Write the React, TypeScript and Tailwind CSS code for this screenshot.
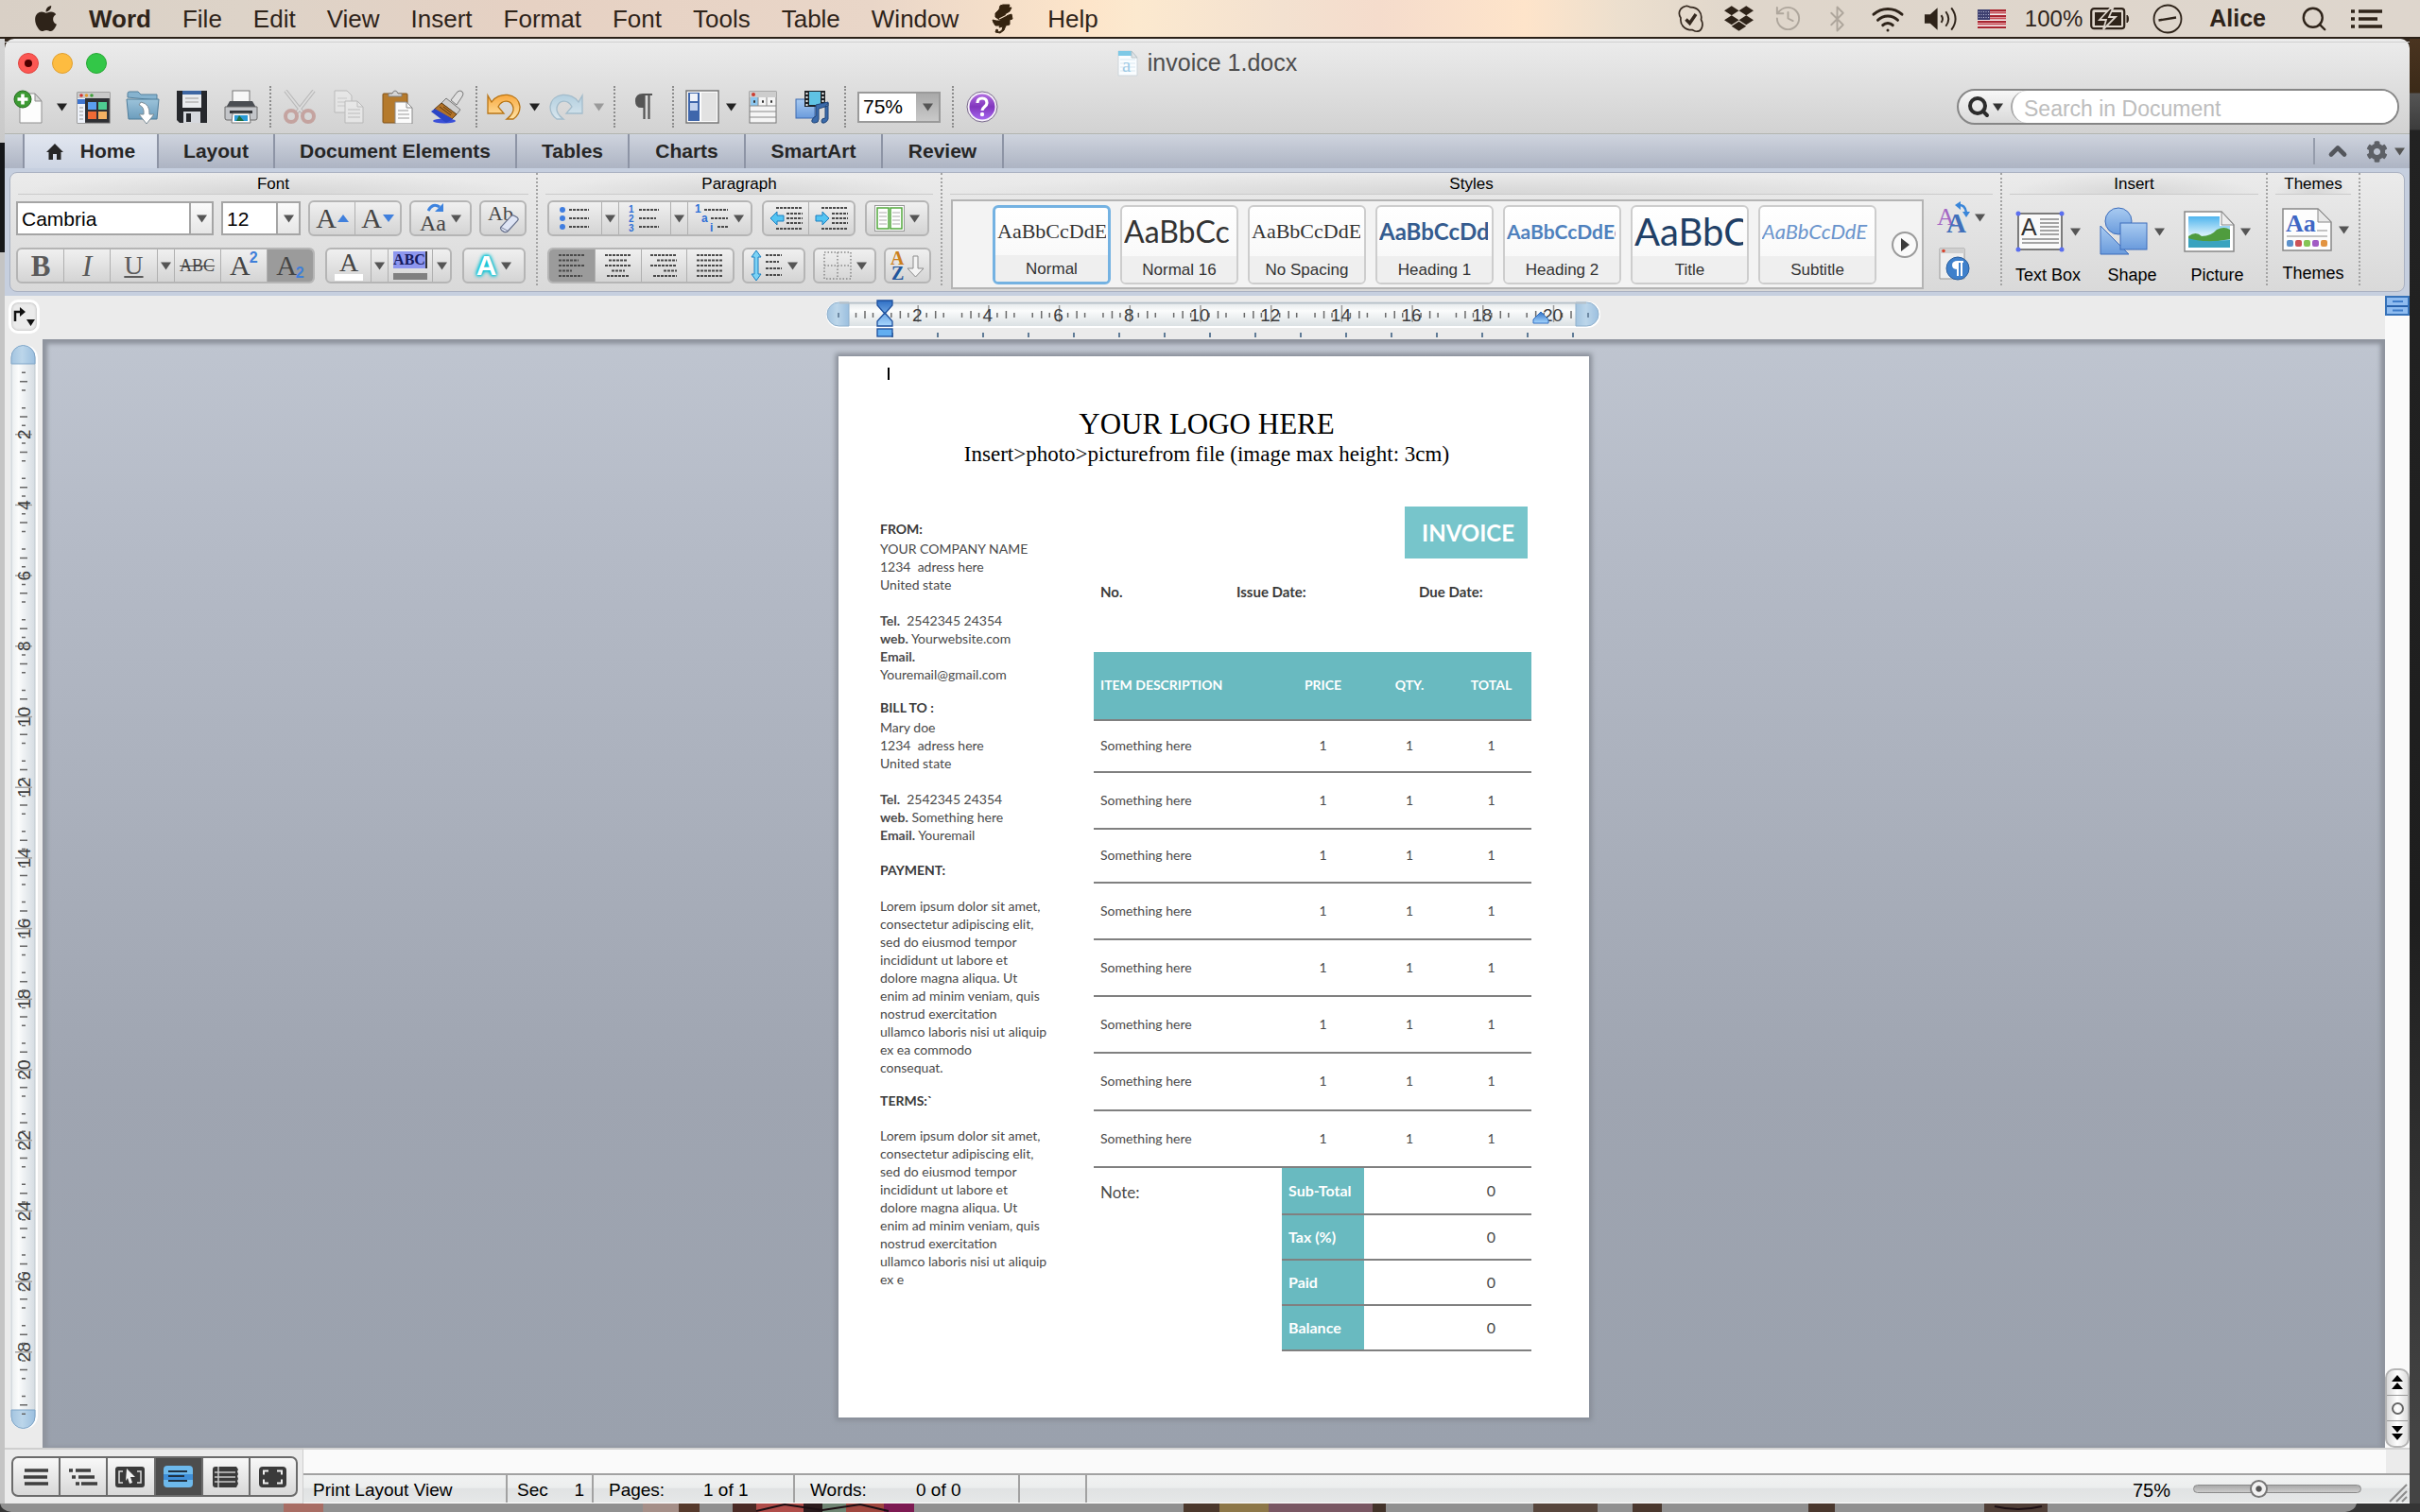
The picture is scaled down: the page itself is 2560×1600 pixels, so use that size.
import React from "react";
import { FaApple, FaDropbox, FaCog } from "react-icons/fa";
import { Bluetooth, History, Search, Wifi, ChevronUp } from "lucide-react";

const SANS = "font-['Liberation_Sans',sans-serif]";
const SERIF = "font-['Liberation_Serif',serif]";

type Kids = { children?: React.ReactNode };

function Defs() {
  return (
    <svg width="0" height="0" className="absolute" aria-hidden="true">
      <defs>
        <linearGradient id="blueV" x1="0" y1="0" x2="0" y2="1">
          <stop offset="0" stopColor="#a9cbf1" />
          <stop offset="1" stopColor="#6a9bdc" />
        </linearGradient>
        <linearGradient id="folder" x1="0" y1="0" x2="0" y2="1">
          <stop offset="0" stopColor="#9cc3da" />
          <stop offset="1" stopColor="#6c9dbd" />
        </linearGradient>
        <linearGradient id="orange" x1="0" y1="0" x2="0" y2="1">
          <stop offset="0" stopColor="#f9a93f" />
          <stop offset="1" stopColor="#ffe3a6" />
        </linearGradient>
        <linearGradient id="pale" x1="0" y1="0" x2="0" y2="1">
          <stop offset="0" stopColor="#b3cfdf" />
          <stop offset="1" stopColor="#d8e6ee" />
        </linearGradient>
        <linearGradient id="sky" x1="0" y1="0" x2="0" y2="1">
          <stop offset="0" stopColor="#4fb4ee" />
          <stop offset="0.6" stopColor="#d8f1fb" />
          <stop offset="1" stopColor="#2f9bc4" />
        </linearGradient>
        <linearGradient id="purple" x1="0" y1="0" x2="0" y2="1">
          <stop offset="0" stopColor="#b06be0" />
          <stop offset="0.5" stopColor="#8136bd" />
          <stop offset="1" stopColor="#a565ee" />
        </linearGradient>
        <linearGradient id="rulerH" x1="0" y1="0" x2="0" y2="1">
          <stop offset="0" stopColor="#e2e7e9" />
          <stop offset="0.35" stopColor="#fbfcfc" />
          <stop offset="1" stopColor="#dbe1e4" />
        </linearGradient>
        <linearGradient id="rulerV" x1="0" y1="0" x2="1" y2="0">
          <stop offset="0" stopColor="#e8ecee" />
          <stop offset="0.3" stopColor="#fbfcfc" />
          <stop offset="1" stopColor="#d5dce2" />
        </linearGradient>
        <linearGradient id="cap" x1="0" y1="0" x2="1" y2="0">
          <stop offset="0" stopColor="#a3c4e0" />
          <stop offset="0.45" stopColor="#bcd6ea" />
          <stop offset="1" stopColor="#9bbfdf" />
        </linearGradient>
        <linearGradient id="marker" x1="0" y1="0" x2="0" y2="1">
          <stop offset="0" stopColor="#2f6fc4" />
          <stop offset="1" stopColor="#a8d8ff" />
        </linearGradient>
      </defs>
    </svg>
  );
}

function Arrow({ color = "#555555" }: { color?: string }) {
  return (
    <svg viewBox="0 0 11 9" className="h-[9px] w-[11px] shrink-0" aria-hidden="true">
      <path d="M0 0.5H11L5.5 8.5Z" fill={color} />
    </svg>
  );
}

/* ---------- system menu bar ---------- */

const MENUS_A = ["File", "Edit", "View", "Insert", "Format", "Font", "Tools", "Table", "Window"];

function MenuBar() {
  return (
    <header className="flex h-[41px] items-center border-b-2 border-[#2b2118] bg-[linear-gradient(90deg,#d9d0c6_0%,#ddd3c8_10%,#e6d1c3_22%,#e9d6c8_36%,#fde5ca_45%,#fce9cf_47%,#f3e1d0_53%,#f5dccc_57%,#fee4ca_63%,#ecdfce_67%,#dfd6cb_72%,#ded6cd_100%)] pr-[39px] pl-[36px] text-[26px] leading-none text-[#2e2319]">
      <nav aria-label="Menu" className="flex items-center gap-[33px] whitespace-nowrap">
        <button aria-label="Apple menu">
          <FaApple className="h-[31px] w-[25px]" />
        </button>
        <button className="font-bold">Word</button>
        {MENUS_A.map((m) => (
          <button key={m}>{m}</button>
        ))}
        <button aria-label="Scripts" className="mx-[2px] w-6">
          <svg viewBox="0 0 24 32" className="h-8 w-6" aria-hidden="true">
            <path
              d="M12 1h7l-1 3h3l-2 4-5 3 1 2 6-2 1 5-3 1v5l-4 1-2 5-4 3-5-1 1-3 2 1-1 1 2 1 3-2 1-4-4 1 1-2-5 0-2-3-1-3 4 1 5 0-6-4v-4l4-4 1-4z"
              fill="#35230f"
              stroke="#35230f"
              strokeLinejoin="round"
            />
            <path d="M8 16l8-4" stroke="#f3dcc4" strokeWidth="1.200" fill="none" />
          </svg>
        </button>
        <button>Help</button>
      </nav>
      <div className="ml-auto flex items-center gap-5 whitespace-nowrap">
        <svg viewBox="0 0 30 30" className="h-[30px] w-[30px]" aria-label="Chat">
          <path
            d="M9 1.5c2-.6 4 .4 5 1.200 8-.2 13 6 11.500 13 3 5 1 12-4 12.500-2 .3-4-1-5-1.500C8 27 3 21 4 14 .5 9 3 3 9 1.500z"
            fill="none"
            stroke="#35291f"
            strokeWidth="1.700"
          />
          <path d="M9.500 15.500l4 4L20 10" fill="none" stroke="#35291f" strokeWidth="3.400" />
        </svg>
        <FaDropbox className="h-[31px] w-[31px]" />
        <History className="h-[31px] w-[33px] text-[#aea69c]" strokeWidth={1.5} />
        <Bluetooth className="h-[30px] w-[31px] text-[#aea69c]" strokeWidth={1.5} />
        <Wifi className="h-[38px] w-[36px]" strokeWidth={2} />
        <svg viewBox="0 0 38 30" className="h-[30px] w-[37px]" aria-label="Volume">
          <path d="M1 10h6l8-7v24l-8-7H1z" fill="#2e2319" />
          <path d="M19 11q3 4 0 8M24 7q6 8 0 16M30 3q9 12 0 24" fill="none" stroke="#2e2319" strokeWidth="2" />
        </svg>
        <svg viewBox="0 0 30 20" className="h-5 w-[30px]" aria-label="US keyboard">
          <rect width="30" height="20" fill="#f4eeee" />
          {[0, 2, 4, 6].map((i) => (
            <rect key={i} y={i * 3} width="30" height="2.200" fill="#a8242f" />
          ))}
          {[1, 3, 5].map((i) => (
            <rect key={i} y={i * 3 - 0.4} width="30" height="1.800" fill="#c94d55" />
          ))}
          <rect width="13" height="11" fill="#3d3f70" />
          <path d="M1 2.500h11M1 5.500h11M1 8.500h11" stroke="#b9bad2" strokeWidth="1" strokeDasharray="1 1.500" />
        </svg>
        <span className="flex items-center gap-2 text-[24px]">
          100%
          <svg viewBox="0 0 42 24" className="h-6 w-[42px]" aria-hidden="true">
            <rect x="1.200" y="1.200" width="35" height="21" rx="3" fill="none" stroke="#2e2319" strokeWidth="2.200" />
            <path d="M39 8c2 1 2 7 0 8z" fill="#2e2319" stroke="#2e2319" />
            <path d="M5 5h28v14H5z" fill="#2e2319" />
            <path d="M21 1L10 13h7l-3 10L27 10h-7l4-9z" fill="#2e2319" stroke="#ded6cd" strokeWidth="1.800" />
          </svg>
        </span>
        <svg viewBox="0 0 32 32" className="mx-1 h-[32px] w-[32px]" aria-label="Clock">
          <circle cx="16" cy="16" r="14.500" fill="none" stroke="#2e2319" strokeWidth="1.800" />
          <path d="M6.500 17.500L25 14.500" stroke="#2e2319" strokeWidth="2.400" />
        </svg>
        <button className="ml-1 text-[25px] font-bold">Alice</button>
        <button aria-label="Spotlight" className="mr-1 ml-4">
          <Search className="h-[30px] w-[30px]" strokeWidth={1.900} />
        </button>
        <button aria-label="Notifications">
          <svg viewBox="0 0 34 20" className="h-5 w-[34px]" aria-hidden="true">
            <path d="M0 2h4M0 10h4M0 18h4M8 2h25M8 10h20M8 18h25" stroke="#2e2319" strokeWidth="3.600" />
          </svg>
        </button>
      </div>
    </header>
  );
}

/* ---------- title and standard toolbar ---------- */

function Sep() {
  return (
    <span className="flex h-11 w-[18px] shrink-0 justify-center">
      <span className="border-l-2 border-dotted border-[#8c8c8c]" />
    </span>
  );
}

function Tool({ label, children, width = "w-[52px]" }: Kids & { label: string; width?: string }) {
  return (
    <button
      aria-label={label}
      className={width + " flex h-11 shrink-0 items-center justify-center"}
    >
      {children}
    </button>
  );
}

function DropBtn({ dim = false, label }: { dim?: boolean; label: string }) {
  return (
    <button aria-label={label} className="flex h-11 w-4 shrink-0 items-center justify-center">
      <Arrow color={dim ? "#9a9a9a" : "#222222"} />
    </button>
  );
}

const ICON = "h-9 w-9";

function Toolbar() {
  return (
    <div className="flex items-center pt-[3px]">
      <Tool label="New">
        <svg viewBox="0 0 36 36" className={ICON}>
          <path d="M8 4h16l7 8v23H8z" fill="#fdfdfd" stroke="#8f8f8f" />
          <path d="M24 4v8h7z" fill="#d7d7d7" stroke="#8f8f8f" />
          <circle cx="11" cy="10" r="9" fill="#3c9a33" stroke="#22691c" />
          <path d="M11 4.500v11M5.500 10h11" stroke="#fff" strokeWidth="3.600" />
        </svg>
      </Tool>
      <DropBtn label="New options" />
      <Tool label="Template gallery">
        <svg viewBox="0 0 36 36" className={ICON}>
          <rect x="1" y="3" width="34" height="32" fill="#2e2f33" stroke="#666" />
          <rect x="1" y="3" width="34" height="6" fill="#c9c9c9" />
          <circle cx="5" cy="6" r="1.800" fill="#d3342f" />
          <circle cx="10.500" cy="6" r="1.800" fill="#e29a2e" />
          <circle cx="16" cy="6" r="1.800" fill="#3fa13b" />
          <rect x="1" y="9" width="8" height="26" fill="#eef2fa" />
          <rect x="1" y="10" width="8" height="5" fill="#3e74cf" />
          <path d="M3 19h4M3 23h4M3 27h4M3 31h4" stroke="#999" />
          <rect x="12" y="13" width="9" height="8" fill="#5a9ff0" />
          <rect x="23" y="13" width="9" height="8" fill="#4ecb91" />
          <rect x="12" y="23" width="9" height="8" fill="#ee6a35" />
          <rect x="23" y="23" width="9" height="8" fill="#f3b163" />
        </svg>
      </Tool>
      <Tool label="Open">
        <svg viewBox="0 0 36 36" className={ICON}>
          <path d="M2 8V4q0-2 2-2h9l3 3h17v6z" fill="#86b3cf" stroke="#54809c" />
          <path d="M1 10h34l-2 21H3z" fill="url(#folder)" stroke="#4f7c99" />
          <path d="M16 13q10 2 9 13h5l-8 10-8-10h5q1-8-5-10z" fill="#fff" stroke="#7c8c96" />
        </svg>
      </Tool>
      <Tool label="Save">
        <svg viewBox="0 0 36 36" className={ICON}>
          <path d="M2 1h32v34H5l-3-3z" fill="#26282c" />
          <rect x="8" y="1" width="20" height="18" fill="#e9ebee" />
          <rect x="8" y="1" width="20" height="4" fill="#3d66a3" />
          <path d="M11 9h14M11 13h14" stroke="#b5b5b5" strokeWidth="1.500" />
          <rect x="9" y="23" width="18" height="12" fill="#d6d9de" />
          <rect x="12" y="25" width="5" height="9" fill="#26282c" />
        </svg>
      </Tool>
      <Tool label="Print">
        <svg viewBox="0 0 36 36" className={ICON}>
          <rect x="9" y="1" width="18" height="14" fill="#f7f7f7" stroke="#777" />
          <path d="M6 12h24l4 7H2z" fill="#4a4d52" />
          <path d="M1 18h34v12q0 2-2 2H3q-2 0-2-2z" fill="#c3c5c9" stroke="#6b6b6b" />
          <path d="M6 22h24v3H6z" fill="#34363a" />
          <path d="M9 25h18l1 10H8z" fill="#fff" stroke="#777" />
          <path d="M11 27h14v6H11z" fill="#2a9ad6" />
          <path d="M16 27l5 6h-8z" fill="#1d6f3f" />
        </svg>
      </Tool>
      <span className="-mx-1">
        <Sep />
      </span>
      <Tool label="Cut">
        <svg viewBox="0 0 36 36" className={ICON + " opacity-60"}>
          <path d="M3 1l18 23M33 1L15 24" stroke="#a3a3a3" strokeWidth="4" />
          <path d="M3 1l18 23M33 1L15 24" stroke="#dedede" strokeWidth="2" />
          <circle cx="9" cy="28" r="6" fill="none" stroke="#b9827c" strokeWidth="4" />
          <circle cx="27" cy="28" r="6" fill="none" stroke="#b9827c" strokeWidth="4" />
        </svg>
      </Tool>
      <Tool label="Copy">
        <svg viewBox="0 0 36 36" className={ICON + " opacity-60"}>
          <path d="M3 1h13l5 5v18H3z" fill="#ececec" stroke="#a5a5a5" />
          <path d="M6 9h10M6 13h10M6 17h8" stroke="#bbb" />
          <path d="M14 12h13l6 6v17H14z" fill="#f0f0f0" stroke="#a5a5a5" />
          <path d="M27 12v6h6M17 21h13M17 25h13M17 29h13" stroke="#a9a9a9" fill="none" />
        </svg>
      </Tool>
      <Tool label="Paste">
        <svg viewBox="0 0 36 36" className={ICON}>
          <rect x="2" y="4" width="26" height="31" rx="1" fill="#b57a2c" stroke="#80531a" />
          <path d="M8 7h14V4h-4q-1-3-3-3t-3 3H8z" fill="#d6d6d6" stroke="#7e7e7e" />
          <path d="M15 13h12l6 6v17H15z" fill="#fcfcfc" stroke="#8a8a8a" />
          <path d="M27 13v6h6" fill="none" stroke="#8a8a8a" />
          <path d="M18 22h11M18 26h12M18 30h12" stroke="#999" />
        </svg>
      </Tool>
      <Tool label="Format painter">
        <svg viewBox="0 0 36 36" className={ICON}>
          <ellipse cx="15" cy="33" rx="12" ry="2.500" fill="#3b50d8" />
          <path d="M22 11L29 2q3-2 5 0t0 5l-6 9z" fill="#e0e0e0" stroke="#777" />
          <path d="M17 9l15 12-4 5L12 14z" fill="#cfcfcf" stroke="#777" />
          <path d="M12 14l16 12-5 5L4 21z" fill="#b27228" stroke="#5f3b11" />
          <path d="M5 20l19 11-7 4L1 23z" fill="#2b45c6" />
          <path d="M10 18l12 9M14 18l9 7" stroke="#5f3b11" />
        </svg>
      </Tool>
      <span className="-mx-1">
        <Sep />
      </span>
      <Tool label="Undo" width="w-12">
        <svg viewBox="0 0 36 30" className="h-[30px] w-9">
          <path d="M1 3l4 7C12-1 33-1 35 15q0 8-7 13h-7q8-6 7-12C26 7 16 7 12 15l6 7H1z" fill="url(#orange)" stroke="#b87414" strokeWidth="1.300" />
        </svg>
      </Tool>
      <DropBtn label="Undo history" />
      <Tool label="Redo">
        <svg viewBox="0 0 36 30" className="h-[30px] w-9">
          <path d="M35 3l-4 7C24-1 3-1 1 15q0 8 7 13h7q-8-6-7-12C10 7 20 7 24 15l-6 7h17z" fill="url(#pale)" stroke="#a3bccb" strokeWidth="1.300" />
        </svg>
      </Tool>
      <DropBtn label="Redo history" dim />
      <Sep />
      <Tool label="Show formatting" width="w-11">
        <svg viewBox="0 0 20 28" className="h-7 w-5">
          <path d="M19 1H9M15.500 1v26M10.500 1v26" fill="none" stroke="#555" strokeWidth="2.200" />
          <path d="M11 0H9Q1 0 1 8t8 7h2z" fill="#555" />
        </svg>
      </Tool>
      <Sep />
      <Tool label="Sidebar" width="w-11">
        <svg viewBox="0 0 36 36" className={ICON}>
          <rect x="1" y="1" width="34" height="34" fill="#fdfdfd" stroke="#777" strokeWidth="1.500" />
          <rect x="3" y="3" width="12" height="30" fill="#3f66ab" />
          <rect x="5" y="4" width="8" height="8" fill="#f0f4fb" />
          <rect x="5" y="14" width="8" height="8" fill="#c2d2ee" />
          <rect x="17" y="3" width="16" height="30" fill="#e2e2e2" />
        </svg>
      </Tool>
      <DropBtn label="Sidebar options" />
      <Tool label="Toolbox">
        <svg viewBox="0 0 36 36" className={ICON}>
          <rect x="4" y="2" width="28" height="33" fill="#f5f5f5" stroke="#777" />
          <rect x="4" y="2" width="28" height="6" fill="#cdcdcd" />
          <circle cx="8" cy="5" r="2" fill="#cb3b30" />
          <rect x="5" y="8" width="8" height="9" fill="#8cc7ef" />
          <path d="M13 8v9M22 8v9M4 17h28M4 23h28M4 29h28" stroke="#888" />
          <path d="M8 12.500h2M17 12.500h2M26 12.500h2" stroke="#333" strokeWidth="2.500" />
        </svg>
      </Tool>
      <Tool label="Media browser">
        <svg viewBox="0 0 36 36" className={ICON}>
          <rect x="1" y="10" width="20" height="20" fill="url(#blueV)" stroke="#3d6ab0" />
          <rect x="10" y="1" width="22" height="17" fill="#1e2226" />
          <rect x="15" y="2" width="12" height="14" fill="#5fc3e4" />
          <path d="M12.500 3v14M29.500 3v14" stroke="#eee" strokeWidth="2" strokeDasharray="2 2" />
          <path d="M22 16l13-3v4l-10 3v11q0 4-4 4t-3-3 4-4zM32 18v12q-4 0-4 3t3 2 4-4V14z" fill="#3a6aaa" stroke="#1f4478" />
        </svg>
      </Tool>
      <Sep />
      <span className="mx-1 flex h-[33px] w-[88px] items-center border-2 border-[#9a9a9a] bg-white">
        <input aria-label="Zoom" defaultValue="75%" className="w-[60px] pl-1 text-[21px] text-black outline-none" />
        <button aria-label="Zoom options" className="flex h-full flex-1 items-center justify-center bg-linear-to-b from-[#a9a9a9] to-[#c9c9c9]">
          <Arrow />
        </button>
      </span>
      <Sep />
      <Tool label="Help" width="w-11">
        <svg viewBox="0 0 34 34" className="h-[34px] w-[34px]">
          <circle cx="17" cy="17" r="16" fill="#f6f0fa" stroke="#77688a" />
          <circle cx="17" cy="17" r="13.500" fill="url(#purple)" />
          <path d="M12 13q0-5 5-5t5 5c0 4-5 4-5 8" fill="none" stroke="#fff" strokeWidth="3.200" />
          <circle cx="17" cy="25" r="2.200" fill="#fff" />
        </svg>
      </Tool>
      <div className="mr-[11px] ml-auto flex h-[38px] w-[468px] items-stretch rounded-full border-2 border-[#868686] bg-linear-to-b from-[#f7f7f7] to-[#d9d9d9]">
        <button aria-label="Search options" className="flex w-[55px] items-center justify-center gap-[3px]">
          <Search className="h-6 w-6 text-[#2c2c2c]" strokeWidth={4} />
          <Arrow color="#333333" />
        </button>
        <input
          aria-label="Search in Document"
          placeholder="Search in Document"
          className="min-w-0 flex-1 rounded-full border-l-2 border-[#a9a9a9] bg-white pt-1 pl-3 text-[23px] leading-none outline-none placeholder:text-[#bdbdbd]"
        />
      </div>
    </div>
  );
}

function TitleBar() {
  return (
    <div className="h-[101px] rounded-t-[10px] border-b border-[#b3b5b0] bg-linear-to-b from-[#ececec] to-[#d2d2d2]">
      <div className="h-1 border-b border-[#d0d0d0]" />
      <div className="grid h-[43px] grid-cols-[1fr_auto_1fr] items-center">
        <div className="flex gap-[14px] pl-[14px]">
          <button aria-label="Close" className="flex h-[22px] w-[22px] items-center justify-center rounded-full border border-[#e0443e] bg-[#fc5753]">
            <span className="h-2 w-2 rounded-full bg-[#4d0000]" />
          </button>
          <button aria-label="Minimize" className="h-[22px] w-[22px] rounded-full border border-[#e0a030] bg-[#fdbc40]" />
          <button aria-label="Zoom window" className="h-[22px] w-[22px] rounded-full border border-[#27a835] bg-[#33c748]" />
        </div>
        <h1 className="flex items-center gap-[10px] text-[25px] leading-none text-[#4d4d4d]">
          <svg viewBox="0 0 22 28" className="h-7 w-[22px] overflow-visible" aria-hidden="true">
            <path d="M1 1h14l6 7v19H1z" fill="#fafdff" stroke="#cdd5da" />
            <path d="M1 1h14v5H1z" fill="#7dc9e6" />
            <path d="M15 1v7h6z" fill="#dfe5e8" stroke="#b9c2c7" />
            <path d="M3 10h16M3 14h16M3 18h16M3 22h16" stroke="#d9e8f1" />
            <text x="5" y="23" fontFamily="Liberation Serif" fontSize="21" fill="#9fcbe6">a</text>
          </svg>
          invoice 1.docx
        </h1>
      </div>
      <Toolbar />
    </div>
  );
}

/* ---------- tabs ---------- */

const TABS: [string, string][] = [
  ["Layout", "w-[123px]"],
  ["Document Elements", "w-[256px]"],
  ["Tables", "w-[119px]"],
  ["Charts", "w-[123px]"],
  ["SmartArt", "w-[145px]"],
  ["Review", "w-[128px]"],
];

function Tabs() {
  return (
    <div className="flex h-9 items-stretch bg-linear-to-b from-[#cfd4de] to-[#adb4c3] text-[21px] font-bold text-[#262626]">
      <div className="w-[21px] border-r-2 border-[#8d94a5]" />
      <nav aria-label="Ribbon tabs" className="flex whitespace-nowrap">
        <button className="flex w-[142px] items-center justify-center gap-[18px] border-r-2 border-[#8d94a5] bg-linear-to-b from-[#e2e7f0] to-[#cdd5e3]">
          <svg viewBox="0 0 18 17" className="h-[17px] w-[18px]" aria-hidden="true">
            <path d="M9 0l9 9h-2.500v8H11v-6H7v6H2.500V9H0z" fill="#262626" />
          </svg>
          Home
        </button>
        {TABS.map(([t, w]) => (
          <button key={t} className={w + " border-r-2 border-[#8d94a5]"}>
            {t}
          </button>
        ))}
      </nav>
      <div className="ml-auto flex items-center">
        <span className="h-7 border-l-2 border-[#959cab]" />
        <button aria-label="Collapse ribbon" className="flex w-12 justify-center">
          <ChevronUp className="h-7 w-7 text-[#53565c]" strokeWidth={4} />
        </button>
        <button aria-label="Ribbon settings" className="flex w-[52px] items-center justify-center gap-[7px]">
          <FaCog className="h-[23px] w-[23px] text-[#5d6066]" />
          <Arrow />
        </button>
      </div>
    </div>
  );
}

/* ---------- ribbon ---------- */

function Group({ title, className, children }: Kids & { title: string; className: string }) {
  return (
    <section aria-label={title} className={className + " flex shrink-0 border-r-2 border-dotted border-[#a3a3a3]"}>
      <div className="flex min-w-0 flex-1 flex-col">
        <h2 className="mx-2 h-[23px] border-b border-[#cbcbcb] bg-[radial-gradient(ellipse_at_bottom,#d6d6d6,transparent_70%)] text-center text-[17px] leading-6 text-black">
          {title}
        </h2>
        {children}
      </div>
    </section>
  );
}

function Segment({ children, className = "" }: Kids & { className?: string }) {
  return (
    <div
      className={
        className +
        " flex h-[38px] shrink-0 divide-x divide-[#b0b0b0] overflow-hidden rounded-[6px] border-2 border-[#b5b5b5] bg-linear-to-b from-[#f0f0f0] to-[#d4d4d4]"
      }
    >
      {children}
    </div>
  );
}

function Cell({ label, children, className = "flex-1", on = false }: Kids & { label: string; className?: string; on?: boolean }) {
  return (
    <button
      aria-label={label}
      aria-pressed={on}
      className={
        className + " flex min-w-0 items-center justify-center gap-[5px] leading-none text-[#444444]" + (on ? " bg-[#9b9b9b]" : "")
      }
    >
      {children}
    </button>
  );
}

function Drop({ label }: { label: string }) {
  return (
    <Cell label={label} className="w-[18px] shrink-0">
      <Arrow />
    </Cell>
  );
}

function Combo({ label, value, width }: { label: string; value: string; width: string }) {
  return (
    <span className={width + " grid h-9 grid-cols-[1fr_24px] self-center border-2 border-[#a5a5a5] bg-white"}>
      <select aria-label={label} className="w-full appearance-none pl-1 text-[21px] leading-none text-black outline-none">
        <option>{value}</option>
      </select>
      <span className="flex items-center justify-center border-l-2 border-[#a5a5a5] bg-linear-to-b from-[#fbfbfb] to-[#e6e6e6]">
        <Arrow />
      </span>
    </span>
  );
}

const LIGN = "stroke-[#4a4a4a] stroke-2 [stroke-dasharray:3_1]";

function Lines({ d }: { d: string }) {
  return (
    <svg viewBox="0 0 30 26" className="h-[26px] w-[30px]" aria-hidden="true">
      <path d={d} className={LIGN} fill="none" />
    </svg>
  );
}

function FontGroup() {
  return (
    <Group title="Font" className="w-[558px]">
      <div className="flex flex-col gap-3 px-[6px] pt-[6px]">
        <div className="flex gap-2">
          <Combo label="Font name" value="Cambria" width="w-[209px]" />
          <Combo label="Font size" value="12" width="w-[84px]" />
          <Segment className="w-[99px]">
            <Cell label="Grow font">
              <span className={SERIF + " -mr-1 text-[30px]"}>A</span>
              <svg viewBox="0 0 12 8" className="h-2 w-3"><path d="M0 8L6 0l6 8z" fill="#4080dd" /></svg>
            </Cell>
            <Cell label="Shrink font">
              <span className={SERIF + " -mr-1 text-[30px]"}>A</span>
              <svg viewBox="0 0 12 8" className="h-2 w-3"><path d="M0 0l6 8 6-8z" fill="#4080dd" /></svg>
            </Cell>
          </Segment>
          <Segment className="w-[66px]">
            <Cell label="Change case">
              <span className="relative">
                <span className={SERIF + " block pt-[9px] text-[24px]"}>Aa</span>
                <svg viewBox="0 0 18 10" className="absolute top-0 left-2 h-[10px] w-[18px]">
                  <path d="M1 8Q6-1 13 4" fill="none" stroke="#3d83df" strokeWidth="3" />
                  <path d="M17 0v9H8z" fill="#3d83df" />
                </svg>
              </span>
              <Arrow />
            </Cell>
          </Segment>
          <Segment className="w-[50px]">
            <Cell label="Clear formatting">
              <span className="relative h-8 w-9">
                <span className={SERIF + " absolute top-0 left-[2px] text-[22px]"}>Ab</span>
                <svg viewBox="0 0 26 24" className="absolute right-0 bottom-0 h-[20px] w-[22px]">
                  <path d="M2 16L15 2q2-2 5 0l3 2q2 2 0 4L11 21q-2 2-5 1l-3-2q-2-2-1-4z" fill="#dfe5f5" stroke="#66708c" strokeWidth="1.500" />
                  <path d="M2 16l9 5" stroke="#66708c" />
                </svg>
              </span>
            </Cell>
          </Segment>
        </div>
        <div className="flex gap-[11px]">
          <Segment className="w-[316px]">
            <Cell label="Bold"><span className={SERIF + " text-[31px] font-bold text-[#5a5a5a]"}>B</span></Cell>
            <Cell label="Italic"><span className={SERIF + " text-[31px] italic text-[#5a5a5a]"}>I</span></Cell>
            <Cell label="Underline"><span className={SERIF + " text-[28px] text-[#5a5a5a] underline decoration-2 underline-offset-2"}>U</span></Cell>
            <Drop label="Underline style" />
            <Cell label="Strikethrough"><span className={SERIF + " text-[18px] line-through"}>ABC</span></Cell>
            <Cell label="Superscript">
              <span className={SERIF + " -mr-[6px] text-[30px]"}>A</span>
              <span className="mb-4 text-[16px] font-bold text-[#3f7fd9]">2</span>
            </Cell>
            <Cell label="Subscript" on>
              <span className={SERIF + " -mr-[6px] text-[30px]"}>A</span>
              <span className="mt-4 text-[16px] font-bold text-[#3f7fd9]">2</span>
            </Cell>
          </Segment>
          <Segment className="w-[134px]">
            <Cell label="Font color">
              <span className={SERIF + " border-b-[7px] border-white px-[5px] text-[28px] leading-[25px]"}>A</span>
            </Cell>
            <Drop label="Font colors" />
            <Cell label="Highlight">
              <span className="flex w-[36px] flex-col gap-[5px]">
                <span className={SERIF + " border-r-2 border-[#333333] bg-[#8e97ef] text-[16px] leading-[18px] font-bold text-[#151a5c]"}>ABC</span>
                <span className="h-[7px] bg-[#808080]" />
              </span>
            </Cell>
            <Drop label="Highlight colors" />
          </Segment>
          <Segment className="w-[67px]">
            <Cell label="Text effects">
              <span className={SANS + " text-[30px] font-bold text-white [text-shadow:0_0_2px_#19c5d6,0_0_3px_#19c5d6,0_0_4px_#19c5d6,0_0_4px_#19c5d6,0_0_5px_#19c5d6]"}>A</span>
              <Arrow />
            </Cell>
          </Segment>
        </div>
      </div>
    </Group>
  );
}

function ParagraphGroup() {
  return (
    <Group title="Paragraph" className="w-[428px]">
      <div className="flex flex-col gap-3 px-[10px] pt-[6px]">
        <div className="flex gap-[10px]">
          <Segment className="w-[217px]">
            <Cell label="Bullets">
              <svg viewBox="0 0 34 26" className="h-[26px] w-[34px]">
                {[3, 12, 21].map((y) => (
                  <circle key={y} cx="4" cy={y + 1} r="3" fill="#3f7de0" />
                ))}
                <path d="M11 4h21M11 13h21M11 22h21" className={LIGN} />
              </svg>
            </Cell>
            <Drop label="Bullet styles" />
            <Cell label="Numbering">
              <svg viewBox="0 0 34 30" className="h-[30px] w-[34px] overflow-visible">
                <text x="0" y="9" fontSize="10" fill="#2f6fd6" fontFamily="Liberation Sans" fontWeight="bold">1</text>
                <text x="0" y="19" fontSize="10" fill="#2f6fd6" fontFamily="Liberation Sans" fontWeight="bold">2</text>
                <text x="0" y="29" fontSize="10" fill="#2f6fd6" fontFamily="Liberation Sans" fontWeight="bold">3</text>
                <path d="M11 6h21M11 15h18M11 24h21" className={LIGN} />
              </svg>
            </Cell>
            <Drop label="Numbering styles" />
            <Cell label="Multilevel list" className="w-[66px] shrink-0">
              <svg viewBox="0 0 36 30" className="h-[30px] w-9 shrink-0 overflow-visible">
                <text x="0" y="9" fontSize="12" fill="#2f6fd6" fontFamily="Liberation Sans" fontWeight="bold">1</text>
                <text x="7" y="19" fontSize="12" fill="#2f6fd6" fontFamily="Liberation Sans" fontWeight="bold">a</text>
                <text x="16" y="29" fontSize="12" fill="#2f6fd6" fontFamily="Liberation Sans" fontWeight="bold">i</text>
                <path d="M10 6h25M17 15h18M24 24h11" className={LIGN} />
              </svg>
              <Arrow />
            </Cell>
          </Segment>
          <Segment className="w-[99px]">
            <Cell label="Decrease indent">
              <svg viewBox="0 0 36 26" className="h-[26px] w-9">
                <path d="M7 2h28M18 8h17M18 13h17M18 18h17M7 24h28" className={LIGN} />
                <path d="M1 13l7-7v4h7v6H8v4z" fill="#54c4f2" stroke="#1a7fc0" />
              </svg>
            </Cell>
            <Cell label="Increase indent">
              <svg viewBox="0 0 36 26" className="h-[26px] w-9">
                <path d="M7 2h28M18 8h17M18 13h17M18 18h17M7 24h28" className={LIGN} />
                <path d="M15 13L8 6v4H1v6h7v4z" fill="#54c4f2" stroke="#1a7fc0" />
              </svg>
            </Cell>
          </Segment>
          <Segment className="w-[68px]">
            <Cell label="Columns">
              <svg viewBox="0 0 32 28" className="h-7 w-8">
                <rect x="0.500" y="0.500" width="31" height="27" fill="#fff" stroke="#999" />
                <rect x="3" y="3" width="12" height="22" fill="none" stroke="#52a83c" strokeWidth="1.500" />
                <rect x="17" y="3" width="12" height="22" fill="none" stroke="#52a83c" strokeWidth="1.500" />
                <path d="M5 8h8M5 12h8M5 16h8M5 20h8M19 8h8M19 12h8M19 16h8M19 20h8" stroke="#aaa" />
              </svg>
              <Arrow />
            </Cell>
          </Segment>
        </div>
        <div className="flex gap-2">
          <Segment className="w-[198px]">
            <Cell label="Align left" on><Lines d="M1 2h28M1 7.500h21M1 13h28M1 18.500h14M1 24h25" /></Cell>
            <Cell label="Center"><Lines d="M1 2h28M5 7.500h20M1 13h28M8 18.500h14M3 24h24" /></Cell>
            <Cell label="Align right"><Lines d="M1 2h28M8 7.500h21M1 13h28M15 18.500h14M4 24h25" /></Cell>
            <Cell label="Justify"><Lines d="M1 2h28M1 7.500h28M1 13h28M1 18.500h28M1 24h28" /></Cell>
          </Segment>
          <Segment className="w-[67px]">
            <Cell label="Line spacing" className="flex-1">
              <svg viewBox="0 0 34 32" className="h-8 w-[34px]">
                <path d="M6 0l5 7H8v18h3l-5 7-5-7h3V7H1z" fill="#7cd3f5" stroke="#1a7fc0" />
                <path d="M16 5h17M16 12h14M16 19h17M16 26h17" className={LIGN} />
              </svg>
              <Arrow />
            </Cell>
          </Segment>
          <Segment className="w-[67px]">
            <Cell label="Borders">
              <svg viewBox="0 0 30 30" className="h-[30px] w-[30px]">
                <path d="M1 1h28v28H1zM15 1v28M1 15h28" fill="none" stroke="#888" strokeWidth="1.500" strokeDasharray="1.500 2" />
              </svg>
              <Arrow />
            </Cell>
          </Segment>
          <Segment className="w-[50px]">
            <Cell label="Sort" className="flex-1">
              <svg viewBox="0 0 36 34" className="h-[34px] w-9 overflow-visible">
                <text x="0" y="16" fontSize="20" fill="#cb7f1c" fontFamily="Liberation Serif" fontWeight="bold">A</text>
                <text x="1" y="32" fontSize="20" fill="#22569c" fontFamily="Liberation Serif" fontWeight="bold">Z</text>
                <path d="M24 7h5v13h6l-8.500 9L18 20h6z" fill="#f4f4f4" stroke="#8a8a8a" />
              </svg>
            </Cell>
          </Segment>
        </div>
      </div>
    </Group>
  );
}

const STYLES: [string, string, string][] = [
  ["Normal", "AaBbCcDdEe", "font-['Liberation_Serif',serif] text-[22px] text-[#333333]"],
  ["Normal 16", "AaBbCc", "font-['Lato',sans-serif] text-[32px] text-[#333333]"],
  ["No Spacing", "AaBbCcDdEe", "font-['Liberation_Serif',serif] text-[22px] text-[#333333]"],
  ["Heading 1", "AaBbCcDd", "font-['Lato',sans-serif] text-[24px] font-bold text-[#355c8f]"],
  ["Heading 2", "AaBbCcDdEe", "font-['Lato',sans-serif] text-[21px] font-bold text-[#4f81bd]"],
  ["Title", "AaBbC", "font-['Lato',sans-serif] text-[40px] text-[#1f3f66]"],
  ["Subtitle", "AaBbCcDdE", "font-['Lato',sans-serif] text-[22px] italic text-[#6a94cc]"],
];

function StylesGroup() {
  return (
    <Group title="Styles" className="min-w-0 flex-1">
      <div className="flex pt-[5px] pl-[9px]">
        <div className="flex h-[95px] min-w-0 flex-1 items-center border-2 border-[#b4b4b4] bg-[#f3f3f3] pl-[42px]">
          <div className="flex min-w-0 flex-1 gap-[10px] overflow-hidden">
            {STYLES.map(([name, sample, cls], i) => (
              <button
                key={name}
                className={
                  (i === 0 ? "border-[3px] border-[#74b2e2]" : "border-2 border-[#cdcdcd]") +
                  " flex h-[84px] w-[125px] shrink-0 flex-col overflow-hidden rounded-[6px] bg-linear-to-b from-white to-[#f6f6f6]"
                }
              >
                <span className={cls + " mx-[2px] flex h-[52px] w-[115px] items-center overflow-hidden leading-none whitespace-nowrap"}>
                  {sample}
                </span>
                <span className="flex w-full flex-1 items-center justify-center bg-[#efefef] pt-[2px] text-[17px] text-[#333333]">{name}</span>
              </button>
            ))}
          </div>
          <button aria-label="More styles" className="mr-1 flex h-[28px] w-[28px] items-center justify-center rounded-full border-2 border-[#9a9a9a] bg-[#fafafa]">
            <svg viewBox="0 0 9 14" className="h-[14px] w-[9px]"><path d="M0 0l9 7-9 7z" fill="#3c3c3c" /></svg>
          </button>
        </div>
        <div className="flex w-[81px] flex-col gap-3 pl-[14px]">
          <button aria-label="Change styles" className="flex h-[38px] items-center gap-1">
            <svg viewBox="0 0 36 34" className="h-[34px] w-9 overflow-visible">
              <text x="0" y="25" fontSize="26" fill="#a366c4" fontFamily="Liberation Serif">A</text>
              <text x="10" y="33" fontSize="29" fill="#4070ba" fontFamily="Liberation Serif" fontWeight="bold">A</text>
              <path d="M22 4q8-1 9 8" fill="none" stroke="#3a86d9" strokeWidth="2.500" />
              <path d="M19 4l6-4v9zM27 11h8l-4 6z" fill="#3a86d9" />
            </svg>
            <Arrow />
          </button>
          <button aria-label="Styles pane" className="flex h-9 items-center">
            <svg viewBox="0 0 36 36" className="h-9 w-9">
              <path d="M3 2h26v32H3z" fill="#eee" stroke="#999" />
              <path d="M3 2h26v5H3z" fill="#cfcfcf" />
              <circle cx="7" cy="4.500" r="1.800" fill="#d8452f" />
              <circle cx="22" cy="23" r="12" fill="#3f80cb" stroke="#2c5f9e" />
              <path d="M28 16h-6M26 16v15M22 16v15" fill="none" stroke="#fff" strokeWidth="2" />
              <path d="M22 15q-6 0-6 4.500t6 4.500z" fill="#fff" />
            </svg>
          </button>
        </div>
      </div>
    </Group>
  );
}

function BigButton({ label, children }: Kids & { label: string }) {
  return (
    <button className="flex flex-col items-center gap-2 text-[18px] leading-none whitespace-nowrap text-black">
      <span className="flex h-[58px] items-center gap-[6px]">
        {children}
        <Arrow />
      </span>
      {label}
    </button>
  );
}

function Ribbon() {
  return (
    <div className="bg-[#c6cfdf] px-[5px] pt-1 pb-[4px]">
      <div className="flex h-[127px] rounded-[8px] border border-[#a9b1c1] bg-linear-to-b from-[#ebebeb] to-[#d9d9d9] pb-[6px]">
        <FontGroup />
        <ParagraphGroup />
        <StylesGroup />
        <Group title="Insert" className="w-[281px]">
          <div className="flex justify-between pt-[10px] pr-4 pl-[14px]">
            <BigButton label="Text Box">
              <svg viewBox="0 0 52 44" className="h-11 w-[52px]">
                <rect x="3" y="3" width="46" height="38" fill="#fafafa" stroke="#555" strokeWidth="1.500" />
                <text x="6" y="26" fontSize="25" fill="#333" fontFamily="Liberation Sans">A</text>
                <path d="M26 9h20M26 13h20M26 17h20M26 21h20M26 25h20M7 30h39M7 34h39" stroke="#888" strokeWidth="1.300" />
                {[[3, 3], [49, 3], [3, 41], [49, 41]].map(([x, y]) => (
                  <circle key={x + "-" + y} cx={x} cy={y} r="2.500" fill="#5b6ff0" />
                ))}
              </svg>
            </BigButton>
            <BigButton label="Shape">
              <svg viewBox="0 0 52 52" className="h-[52px] w-[52px]">
                <circle cx="20" cy="15" r="14" fill="url(#blueV)" stroke="#3d6dbb" />
                <path d="M1 20v30h30z" fill="url(#blueV)" stroke="#3d6dbb" />
                <rect x="22" y="17" width="28" height="28" fill="url(#blueV)" stroke="#3d6dbb" />
              </svg>
            </BigButton>
            <BigButton label="Picture">
              <svg viewBox="0 0 54 44" className="h-11 w-[54px]">
                <path d="M1 1h39l13 14v28H1z" fill="#fff" stroke="#888" strokeWidth="1.500" />
                <path d="M5 6h33v10h11v23H5z" fill="url(#sky)" />
                <path d="M5 27q8-6 14 0 10 0 16-7 8-4 14 0v10q-20 4-44 3z" fill="#4f9c3e" />
                <path d="M5 29q12 5 44 2v8H5z" fill="#3aa3bf" />
                <path d="M40 1v14h13z" fill="#eee" stroke="#888" />
              </svg>
            </BigButton>
          </div>
        </Group>
        <Group title="Themes" className="w-[98px]">
          <div className="flex justify-center pt-[8px]">
            <BigButton label="Themes">
              <svg viewBox="0 0 54 46" className="ml-1 h-[46px] w-[54px]">
                <path d="M1 1h37l14 14v30H1z" fill="#fdfdfd" stroke="#888" strokeWidth="1.500" />
                <path d="M38 1v14h14z" fill="#e8e8e8" stroke="#888" />
                <text x="4" y="25" fontSize="26" fill="#3f66c4" fontFamily="Liberation Serif" fontWeight="bold">Aa</text>
                <path d="M37 24h11M5 30h43" stroke="#c4c4c4" strokeWidth="2" />
                {["#5d92cc", "#cc5358", "#86c556", "#a15cc4", "#e29442"].map((c, i) => (
                  <rect key={c} x={5 + i * 9} y="34" width="7" height="7" rx="2" fill={c} />
                ))}
              </svg>
            </BigButton>
          </div>
        </Group>
        <div className="w-[46px]" />
      </div>
    </div>
  );
}

/* ---------- rulers ---------- */

const UNIT = 37.35;
const EVENS = [2, 4, 6, 8, 10, 12, 14, 16, 18, 20];
const V_EVENS = [2, 4, 6, 8, 10, 12, 14, 16, 18, 20, 22, 24, 26, 28];

function HorizontalRuler() {
  const units = Array.from({ length: 21 }, (_, i) => i);
  const tabs = Array.from({ length: 16 }, (_, i) => 70 + i * 48);
  return (
    <svg viewBox="0 0 820 46" className="h-[46px] w-[820px]" aria-label="Horizontal ruler">
      <rect x="0" y="6" width="819" height="28" rx="14" fill="#fff" />
      <rect x="1" y="7" width="816" height="25" rx="12.500" fill="url(#rulerH)" />
      <path d="M24 7H13.500a12.500 12.500 0 0 0 0 25H24z" fill="url(#cap)" stroke="#8fb0cc" />
      <path d="M793 7h11.500a12.500 12.500 0 0 1 0 25H793z" fill="url(#cap)" stroke="#8fb0cc" />
      <path d="M14 7.500h790" stroke="#b5bfc7" strokeWidth="2" />
      {units.map((u) => {
        const x = 21.5 + u * UNIT;
        return (
          <path
            key={u}
            d={u < 20 ? `M${x + 10} 18v5M${x + 19.500} 16v8M${x + 28} 18v5` : `M${x + 10} 18v5M${x + 19.500} 16v8`}
            stroke="#6b6b6b"
            strokeWidth="1.500"
          />
        );
      })}
      <path d="M13 18v5M806 18v5" stroke="#56718c" strokeWidth="1.500" />
      {EVENS.map((n) => {
        const x = 21.5 + n * UNIT;
        return (
          <g key={n}>
            <path d={`M${x + 1} 10v18`} stroke="#9a9a9a" strokeWidth="1.500" />
            <text x={x} y="27" fontSize="19" textAnchor="middle" fontFamily="Liberation Sans" fill="#3c3c3c">
              {n}
            </text>
          </g>
        );
      })}
      {tabs.map((x) => (
        <path key={x} d={`M${x} 39v5`} stroke="#52708e" strokeWidth="1.800" />
      ))}
      <path d="M54 5h16v5l-8 9-8-9zM62 18l8 9v5H54v-5z" fill="url(#marker)" stroke="#1d4f9c" strokeWidth="1.300" />
      <rect x="54" y="35" width="16" height="8" fill="#62aef0" stroke="#1d4f9c" strokeWidth="1.300" />
      <path d="M756 17l8 8v4h-16v-4z" fill="url(#marker)" stroke="#2f6fc4" />
    </svg>
  );
}

function VerticalRuler() {
  const units = Array.from({ length: 30 }, (_, i) => i);
  return (
    <svg viewBox="0 0 30 1150" className="h-[1150px] w-[30px]" aria-label="Vertical ruler">
      <rect x="1" y="2" width="29" height="1147" rx="14" fill="#fff" />
      <rect x="2" y="3" width="25" height="1145" rx="12.500" fill="url(#rulerV)" stroke="#c0c8ce" />
      <path d="M2 22v-7a12.500 12.500 0 0 1 25 0v7z" fill="url(#cap)" stroke="#7fa5c7" />
      <path d="M2 1129v7a12.500 12.500 0 0 0 25 0v-7z" fill="url(#cap)" stroke="#7fa5c7" />
      {units.map((u) => {
        const y = 22 + u * UNIT;
        return (
          <path key={u} d={`M13 ${y + 9.3}h4M11 ${y + 18.7}h8M13 ${y + 28}h4`} stroke="#666" strokeWidth="1.500" />
        );
      })}
      {V_EVENS.map((n) => {
        const y = 22 + n * UNIT;
        return (
          <g key={n}>
            <path d={`M6 ${y}h18`} stroke="#a2a2a2" strokeWidth="1.500" />
            <text
              x="0"
              y="0"
              transform={`translate(22 ${y}) rotate(-90)`}
              fontSize="19"
              textAnchor="middle"
              fontFamily="Liberation Sans"
              fill="#3c3c3c"
            >
              {n}
            </text>
          </g>
        );
      })}
    </svg>
  );
}

/* ---------- invoice page ---------- */

const LOREM = [
  "Lorem ipsum dolor sit amet,",
  "consectetur adipiscing elit,",
  "sed do eiusmod tempor",
  "incididunt ut labore et",
  "dolore magna aliqua. Ut",
  "enim ad minim veniam, quis",
  "nostrud exercitation",
  "ullamco laboris nisi ut aliquip",
];

const ROWS = ["h-[55px]", "h-[60px]", "h-[57px]", "h-[60px]", "h-[60px]", "h-[60px]", "h-[61px]", "h-[60px]"];
const RULE = "border-b-2 border-[#808080] pb-[2px]";

function Side({ title, children, className }: Kids & { title: string; className: string }) {
  return (
    <section className={className}>
      <h3 className="font-bold text-[#3a3a3a]">{title}</h3>
      {children}
    </section>
  );
}

function Page() {
  return (
    <article className="mx-auto min-h-[1123px] w-[794px] bg-white pr-[61px] pl-11 font-['Lato',sans-serif] text-[14px] leading-[19px] text-[#4a4a4a] shadow-[0_0_5px_3px_#878d97]">
      <div className="flex h-[52px] items-start pt-3 pl-2">
        <span className="h-[13px] w-[2px] bg-black" />
      </div>
      <header className={SERIF + " pl-[2px] text-center text-black"}>
        <p className="text-[31px] leading-[40px]">YOUR LOGO HERE</p>
        <p className="text-[23px] leading-6">Insert&gt;photo&gt;picturefrom file (image max height: 3cm)</p>
      </header>
      <div className="flex items-start justify-between pt-[43px]">
        <aside className="w-[190px] pt-[14px]">
          <Side title="FROM:" className="mb-4">
            <p className="mt-[2px]">YOUR COMPANY NAME</p>
            <p className="whitespace-pre">1234  adress here</p>
            <p>United state</p>
            <p className="mt-[19px] whitespace-pre"><b>Tel.</b>  2542345 24354</p>
            <p><b>web.</b> Yourwebsite.com</p>
            <p><b>Email.</b></p>
            <p>Youremail@gmail.com</p>
          </Side>
          <Side title="BILL TO :" className="mb-[18px]">
            <p className="mt-[2px]">Mary doe</p>
            <p className="whitespace-pre">1234  adress here</p>
            <p>United state</p>
            <p className="mt-[19px] whitespace-pre"><b>Tel.</b>  2542345 24354</p>
            <p><b>web.</b> Something here</p>
            <p><b>Email.</b> Youremail</p>
          </Side>
          <Side title="PAYMENT:" className="mb-4">
            <p className="mt-[19px] whitespace-pre-line">{[...LOREM, "ex ea commodo", "consequat."].join("\n")}</p>
          </Side>
          <Side title="TERMS:`" className="">
            <p className="mt-[18px] whitespace-pre-line">{[...LOREM, "ex e"].join("\n")}</p>
          </Side>
        </aside>
        <div className="w-[463px]">
          <div className="mr-1 ml-auto flex h-[55px] w-[130px] items-center justify-center bg-[#77c5cb] pl-1 text-[24px] font-bold text-white">
            INVOICE
          </div>
          <dl className="grid h-[99px] grid-cols-[144px_193px_1fr] pt-[26px] pl-[7px] text-[15px] font-bold text-[#3a3a3a]">
            <dt>No.</dt>
            <dt>Issue Date:</dt>
            <dt>Due Date:</dt>
          </dl>
          <table className="w-full table-fixed border-separate border-spacing-0">
            <colgroup>
              <col />
              <col className="w-[87px]" />
              <col className="w-[96px]" />
              <col className="w-[81px]" />
            </colgroup>
            <thead>
              <tr className="h-[73px] bg-[#69bac0] text-[14px] text-white">
                <th className={RULE + " pl-[7px] text-left"}>ITEM DESCRIPTION</th>
                <th className={RULE}>PRICE</th>
                <th className={RULE}>QTY.</th>
                <th className={RULE + " pr-1"}>TOTAL</th>
              </tr>
            </thead>
            <tbody className="text-center">
              {ROWS.map((h, i) => (
                <tr key={i} className={h}>
                  <td className={RULE + " pl-[7px] text-left"}>Something here</td>
                  <td className={RULE}>1</td>
                  <td className={RULE}>1</td>
                  <td className={RULE + " pr-1"}>1</td>
                </tr>
              ))}
              {["Sub-Total", "Tax (%)", "Paid", "Balance"].map((t, i) => (
                <tr key={t} className={(i === 0 ? "h-[50px]" : "h-[48px]") + " text-[16px]"}>
                  {i === 0 && (
                    <td rowSpan={4} className="pt-4 pl-[7px] text-left align-top text-[17px]">
                      Note:
                    </td>
                  )}
                  <th scope="row" className={RULE + " bg-[#69bac0] pl-[7px] text-left text-white"}>{t}</th>
                  <td className={RULE} />
                  <td className={RULE + " pr-1"}>0</td>
                </tr>
              ))}
            </tbody>
          </table>
        </div>
      </div>
    </article>
  );
}

/* ---------- bottom bar ---------- */

function BottomBar() {
  const view = "flex flex-1 items-center justify-center";
  return (
    <footer className="flex h-[59px] shrink-0 bg-[#fafafa]">
      <div className="w-[316px] shrink-0 border-t-2 border-r border-[#cfcfcf] bg-[#ebebeb] pt-[7px] pl-[7px]">
        <div className="flex h-[43px] w-[303px] divide-x-2 divide-[#6b6b6b] overflow-hidden rounded-[7px] border-2 border-[#6b6b6b] bg-linear-to-b from-[#f8f8f8] to-[#d8d8d8]">
          <button aria-label="Draft view" className={view}>
            <svg viewBox="0 0 28 20" className="h-5 w-7"><path d="M2 3h25M1 10h25M2 17h25" stroke="#3f3f3f" strokeWidth="3.500" /></svg>
          </button>
          <button aria-label="Outline view" className={view}>
            <svg viewBox="0 0 32 20" className="h-5 w-8"><path d="M1 3h4M8 3h16M4 10h4M11 10h17M8 17h4M14 17h17" stroke="#3f3f3f" strokeWidth="3.500" /></svg>
          </button>
          <button aria-label="Publishing layout view" className={view}>
            <svg viewBox="0 0 32 22" className="h-[22px] w-8">
              <rect width="31" height="22" rx="3" fill="#3a3a3a" />
              <path d="M8 5H4v12h4M23 5h4v12h-4" fill="none" stroke="#ddd" strokeWidth="1.500" />
              <path d="M12 2l9 9h-5l2 6-3 1-2-6-2 3z" fill="#f2f2f2" />
            </svg>
          </button>
          <button aria-label="Print layout view" aria-pressed="true" className={view + " bg-[#4d4d4d]"}>
            <svg viewBox="0 0 32 24" className="h-6 w-8">
              <rect width="31" height="23" rx="4" fill="#6db9ec" />
              <rect y="9" width="31" height="6" fill="#3f8fd8" />
              <path d="M5 6h20M5 11h17M5 16h20" stroke="#1f3142" strokeWidth="2" />
            </svg>
          </button>
          <button aria-label="Notebook layout view" className={view}>
            <svg viewBox="0 0 28 24" className="h-6 w-7">
              <path d="M3 1h22l2 3-1 2 1 3-1 2 1 3-1 2 1 3-2 4H3q-3 0-3-3V4q0-3 3-3z" fill="#3a3a3a" />
              <path d="M6 1v22M2 7h22M2 12h22M2 17h22" stroke="#c9c9c9" strokeWidth="1.500" />
            </svg>
          </button>
          <button aria-label="Full screen view" className={view}>
            <svg viewBox="0 0 30 22" className="h-[22px] w-[30px]">
              <rect width="29" height="22" rx="4" fill="#3a3a3a" />
              <path d="M10 4.500H5v4M19 4.500h5v4M10 17.500H5v-4M19 17.500h5v-4" fill="none" stroke="#eee" strokeWidth="2" />
            </svg>
          </button>
        </div>
      </div>
      <div className="flex min-w-0 flex-1 flex-col">
        <div className="flex h-[27px] border-t-2 border-[#d3d3d3] bg-[#fafafa]">
          <div className="ml-auto w-[25px] bg-[#ebebeb]" />
        </div>
        <div className="flex h-8 items-stretch border-t-2 border-b border-t-[#a2a2a2] border-b-white bg-[linear-gradient(#f1f2f2_0%,#eceeee_45%,#e0e2e3_50%,#e6e8e8_100%)] text-[19px] leading-[26px] text-black">
          <span className="w-[216px] border-r-2 border-[#a2a2a2] pt-[3px] pl-[10px]">Print Layout View</span>
          <span className="flex w-[91px] justify-between border-r-2 border-[#a2a2a2] pt-[3px] pr-2 pl-[10px]"><span>Sec</span><span>1</span></span>
          <span className="flex w-[213px] border-r-2 border-[#a2a2a2] pt-[3px] pl-4"><span className="w-[100px]">Pages:</span><span>1 of 1</span></span>
          <span className="flex w-[238px] border-r-2 border-[#a2a2a2] pt-[3px] pl-4"><span className="w-[112px]">Words:</span><span>0 of 0</span></span>
          <span className="w-[71px] border-r-2 border-[#a2a2a2]" />
          <label htmlFor="zoom" className="mr-6 ml-auto pt-[3px] text-[20px]">75%</label>
          <input
            id="zoom"
            type="range"
            min={0}
            max={200}
            defaultValue={75}
            className="h-[9px] w-[178px] appearance-none self-center rounded-full border border-[#8a8a8a] bg-linear-to-b from-[#a9a9a9] to-[#cccccc] [&::-webkit-slider-thumb]:h-[19px] [&::-webkit-slider-thumb]:w-[19px] [&::-webkit-slider-thumb]:appearance-none [&::-webkit-slider-thumb]:rounded-full [&::-webkit-slider-thumb]:border-2 [&::-webkit-slider-thumb]:border-[#777777] [&::-webkit-slider-thumb]:bg-[radial-gradient(#555555_25%,#f2f2f2_35%)]"
          />
          <svg viewBox="0 0 20 20" className="ml-[29px] mr-[2px] h-5 w-5 self-end" aria-hidden="true">
            <path d="M1 19L19 1M8 19L19 8M14 19l5-5" stroke="#8d8d8d" strokeWidth="2" />
          </svg>
        </div>
      </div>
    </footer>
  );
}

function ScrollColumn() {
  const nav = "flex h-[27px] items-center justify-center border-b border-[#999999]";
  return (
    <div className="flex w-[26px] shrink-0 flex-col justify-between bg-[#fafafa]">
      <div className="h-[21px] border-2 border-[#3672b9] bg-[#8fbcf0]">
        <svg viewBox="0 0 22 17" className="h-[17px] w-[22px]" aria-label="Split handle">
          <path d="M0 9h22" stroke="#2762ae" strokeWidth="2" />
          <path d="M6 4h11M6 13.500h11" stroke="#3f7dca" strokeWidth="2" />
        </svg>
      </div>
      <div className="overflow-hidden rounded-[10px] border-2 border-[#b5b5b5] bg-linear-to-r from-[#d8d8d8] via-white to-[#dedede]">
        <button aria-label="Previous page" className={nav + " w-full"}>
          <svg viewBox="0 0 12 16" className="h-4 w-3"><path d="M6 0l6 7H0zM6 8l6 7H0z" fill="#000" /></svg>
        </button>
        <button aria-label="Browse object" className={nav + " w-full"}>
          <span className="h-[13px] w-[13px] rounded-full border-2 border-[#666666]" />
        </button>
        <button aria-label="Next page" className="flex h-[26px] w-full items-center justify-center">
          <svg viewBox="0 0 12 16" className="h-4 w-3"><path d="M0 0h12L6 7zM0 8h12l-6 7z" fill="#000" /></svg>
        </button>
      </div>
    </div>
  );
}

/* ---------- desktop showing round the window ---------- */

function DesktopStrip() {
  const bits: [number, number, string][] = [
    [300, 42, "#a86d64"], [680, 38, "#a58f88"], [718, 22, "#563a2c"], [775, 32, "#4a2a25"],
    [800, 50, "#b04d4a"], [850, 40, "#2a1a1c"], [870, 30, "#6f8573"], [895, 40, "#a0473f"],
    [935, 32, "#7d1a52"], [1252, 40, "#4b382c"], [1290, 52, "#8d7748"], [1342, 110, "#795763"],
    [1452, 14, "#43332a"], [1622, 68, "#57463c"], [1727, 31, "#4a382e"], [1913, 28, "#4a382e"],
    [2099, 67, "#503f37"],
  ];
  return (
    <svg viewBox="0 0 2560 9" preserveAspectRatio="none" className="block h-[9px] w-full" aria-hidden="true">
      <rect width="2560" height="9" fill="#353535" />
      <path d="M0 0h2493q-2 8-12 9H12Q2 8 0 0z" fill="#909090" />
      {bits.map(([x, w, c]) => (
        <rect key={x} x={x} width={w} height="9" fill={c} />
      ))}
      <path d="M800 8l30-7 40 6 40-6 30 7M2110 3q25 6 50 0" fill="none" stroke="#1d1014" strokeWidth="2" />
    </svg>
  );
}

export default function App() {
  return (
    <div className={SANS + " flex min-h-screen flex-col bg-[#33271c]"}>
      <Defs />
      <MenuBar />
      <div className="flex flex-1">
        <div className="w-[5px] shrink-0 bg-[linear-gradient(#d4d4d4_0,#c9c9c9_110px,#15171a_110px,#15171a_226px,#c4c4c4_226px)]" />
        <main className="flex min-w-0 flex-1 flex-col">
          <TitleBar />
          <Tabs />
          <Ribbon />
          <div className="flex flex-1 bg-[#ebebeb]">
            <div className="flex w-10 shrink-0 flex-col items-center">
              <button aria-label="Tab stop" className="mt-1 flex h-9 w-[33px] items-center justify-center rounded-[10px] border-[3px] border-white shadow-[inset_0_0_3px_#aaaaaa]">
                <svg viewBox="0 0 24 24" className="h-6 w-6" aria-hidden="true">
                  <path d="M3 17V7h6" fill="none" stroke="#111" strokeWidth="2.500" />
                  <path d="M8 2l6 5-6 5zM15 15h9l-4.500 7z" fill="#111" />
                </svg>
              </button>
              <div className="pt-[10px]">
                <VerticalRuler />
              </div>
            </div>
            <div className="flex min-w-0 flex-1 flex-col">
              <div className="flex h-[46px] justify-center">
                <HorizontalRuler />
              </div>
              <div className="flex-1 bg-[linear-gradient(#bfc5d0_0%,#b6bcc8_15%,#9fa5b1_67%,#9aa1ad_100%)] pt-[18px] pb-8 shadow-[inset_0_5px_4px_#8f949e,inset_5px_0_4px_#8f949e,inset_-5px_0_4px_#8f949e]">
                <Page />
              </div>
            </div>
            <ScrollColumn />
          </div>
          <BottomBar />
        </main>
        <div className="w-[11px] shrink-0 bg-[linear-gradient(#4a3420_0,#3b2a18_57px,#555555_58px,#3c3c3c_96px,#222222_97px,#1e1e1e_60%,#444444_95%)]" />
      </div>
      <DesktopStrip />
    </div>
  );
}
